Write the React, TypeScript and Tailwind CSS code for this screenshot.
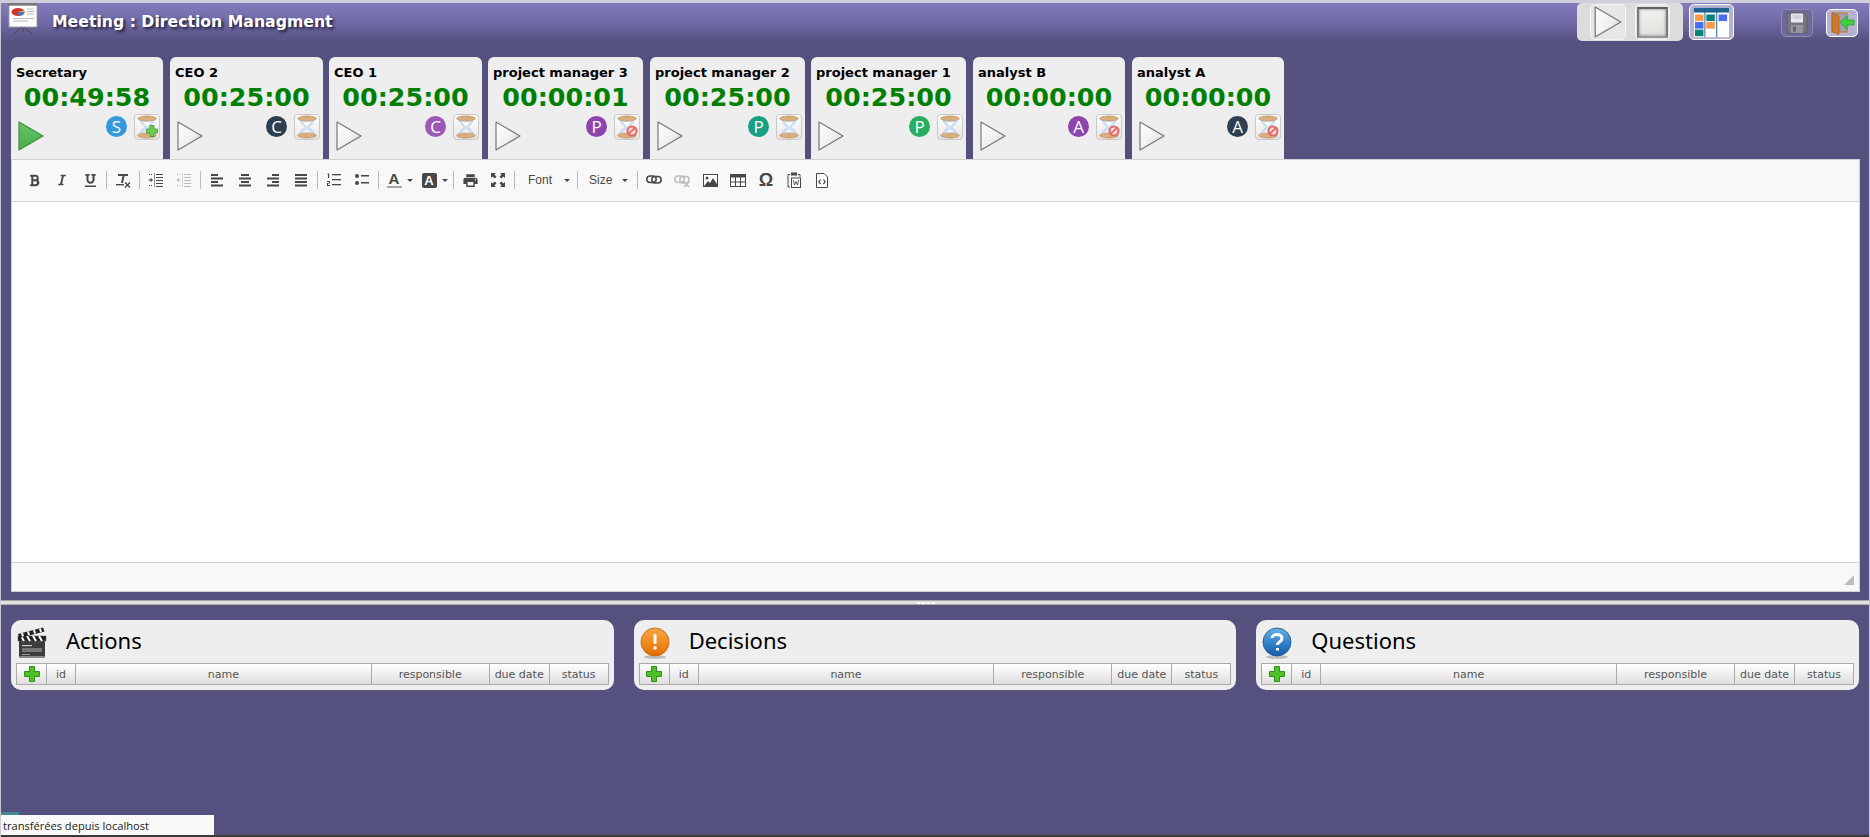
import React from "react";
import { FaBold, FaItalic, FaUnderline } from "react-icons/fa";
import { MdPrint } from "react-icons/md";

const Play = ({ green = false, w = 26, h = 30 }: { green?: boolean; w?: number; h?: number }) => (
  <svg width={w} height={h} viewBox="0 0 26 30">
    <defs>
      <linearGradient id="pw" x1="0" y1="0" x2="1" y2="1">
        <stop offset="0" stopColor="#ffffff" />
        <stop offset="0.5" stopColor="#f2f2f2" />
        <stop offset="1" stopColor="#d2d2d2" />
      </linearGradient>
      <linearGradient id="pg" x1="0" y1="0" x2="0" y2="1">
        <stop offset="0" stopColor="#66c566" />
        <stop offset="1" stopColor="#48ad48" />
      </linearGradient>
    </defs>
    <path d="M1 1 L25 15 L1 29 Z" fill={green ? "url(#pg)" : "url(#pw)"} stroke={green ? "#3f8f3f" : "#777777"} strokeWidth="1.2" strokeLinejoin="round" />
  </svg>
);

const Hourglass = ({ badge }: { badge?: "add" | "no" }) => (
  <div className="relative w-[26px] h-[26px] rounded-[4px] border border-[#c8c8c8] bg-[linear-gradient(#ffffff,#e6e6e6)] flex items-center justify-center shrink-0">
    <svg width="24" height="24" viewBox="0 0 22 22">
      <path d="M4.5 3 C4.5 9 9.5 10 9.5 11 C9.5 12 4.5 13 4.5 19 L17.5 19 C17.5 13 12.5 12 12.5 11 C12.5 10 17.5 9 17.5 3 Z" fill="#cfe3f8" stroke="#a9c2de" strokeWidth="0.5" />
      <path d="M7.5 6.5 L14.5 6.5 L11 10.5 Z" fill="#ffffff" />
      <path d="M6.5 18 C8 14.5 10 14 11 13 C12 14 14 14.5 15.5 18 Z" fill="#f3f8fe" />
      <ellipse cx="11" cy="3.2" rx="8.6" ry="2.4" fill="#d9ae7e" stroke="#b58a5c" strokeWidth="0.5" />
      <ellipse cx="11" cy="18.8" rx="8.6" ry="2.4" fill="#d9ae7e" stroke="#b58a5c" strokeWidth="0.5" />
    </svg>
    {badge === "add" && (
      <svg className="absolute right-[1px] bottom-[2px]" width="12" height="12" viewBox="0 0 12 12">
        <path d="M4 .5 H8 V4 H11.5 V8 H8 V11.5 H4 V8 H.5 V4 H4 Z" fill="#6fcf4f" stroke="#3d9a2d" strokeWidth="0.8" />
      </svg>
    )}
    {badge === "no" && (
      <svg className="absolute right-[1px] bottom-[2px]" width="12" height="12" viewBox="0 0 12 12">
        <circle cx="6" cy="6" r="5.6" fill="#e46a6a" />
        <circle cx="6" cy="6" r="3.4" fill="#f6dede" />
        <path d="M3 8.6 L8.8 3" stroke="#e46a6a" strokeWidth="1.8" />
      </svg>
    )}
  </div>
);

type C = { title: string; time: string; w: string; play?: boolean; letter: string; color: string; badge?: "add" | "no" };
const cards: C[] = [
  { title: "Secretary", time: "00:49:58", w: "w-[152px] mr-px", play: true, letter: "S", color: "bg-[#3498db]", badge: "add" },
  { title: "CEO 2", time: "00:25:00", w: "w-[153px]", letter: "C", color: "bg-[#2c3e50]" },
  { title: "CEO 1", time: "00:25:00", w: "w-[153px]", letter: "C", color: "bg-[#9b59b6]" },
  { title: "project manager 3", time: "00:00:01", w: "w-[155px] mr-px", letter: "P", color: "bg-[#8e44ad]", badge: "no" },
  { title: "project manager 2", time: "00:25:00", w: "w-[155px]", letter: "P", color: "bg-[#16a085]" },
  { title: "project manager 1", time: "00:25:00", w: "w-[155px] mr-px", letter: "P", color: "bg-[#27ae60]" },
  { title: "analyst B", time: "00:00:00", w: "w-[152px] mr-px", letter: "A", color: "bg-[#8e44ad]", badge: "no" },
  { title: "analyst A", time: "00:00:00", w: "w-[152px]", letter: "A", color: "bg-[#2c3e50]", badge: "no" },
];

const Card = ({ c }: { c: C }) => (
  <div className={`${c.w} h-[102px] rounded-t-[6px] bg-[#eeeeee] shrink-0 flex flex-col pt-[8px]`}>
    <div className="pl-[5px] h-[16px] leading-[16px] text-[13px] font-bold text-black font-['DejaVu_Sans',sans-serif] whitespace-nowrap">{c.title}</div>
    <div className="h-[30px] mt-[1px] leading-[30px] text-center text-[25.4px] font-bold text-[#008000] font-['DejaVu_Sans',sans-serif]">{c.time}</div>
    <div className="flex justify-between pl-[7px] pr-[3px] mt-[2px]">
      <div className="mt-[7px]"><Play green={c.play} /></div>
      <div className="flex gap-[7px] items-start">
        <div className={`${c.color} mt-[2px] w-[21px] h-[21px] rounded-full text-white flex items-center justify-center text-[17px] leading-none font-['Open_Sans',sans-serif]`}>{c.letter}</div>
        <Hourglass badge={c.badge} />
      </div>
    </div>
  </div>
);

const Ic = ({ children, dim = false }: { children: React.ReactNode; dim?: boolean }) => (
  <svg width="16" height="16" viewBox="0 0 16 16" fill={dim ? "#bdbdbd" : "#474747"}>{children}</svg>
);
const Btn = ({ children }: { children: React.ReactNode }) => (
  <div className="w-[28px] h-[24px] flex items-center justify-center shrink-0 text-[#474747]">{children}</div>
);
const Sep = () => <div className="w-px h-[18px] mx-[2px] bg-[#bcbcbc] shrink-0" />;
const Caret = () => <div className="ml-[5px] w-0 h-0 border-l-[3px] border-r-[3px] border-t-[3px] border-l-transparent border-r-transparent border-t-[#474747]" />;
const Bars = ({ xs }: { xs: [number, number][] }) => (
  <Ic>{xs.map(([x, w], i) => <rect key={i} x={x} y={2 + i * 3.5} width={w} height="2" />)}</Ic>
);
const Indent = ({ dim, out }: { dim?: boolean; out?: boolean }) => (
  <Ic dim={dim}>
    <rect x="8" y="2" width="7" height="1" /><rect x="8" y="5" width="7" height="1" /><rect x="8" y="8" width="7" height="1" /><rect x="8" y="11" width="7" height="1" /><rect x="8" y="14" width="7" height="1" />
    <rect x="6" y="1" width="1" height="14" opacity="0.6" />
    {out ? <path d="M5 8 L2.5 5.8 V7.5 H0.5 V8.5 H2.5 V10.2 Z" transform="translate(5.5 0) scale(-1 1)" /> : <path d="M5 8 L2.5 5.8 V7.5 H0.5 V8.5 H2.5 V10.2 Z" />}
    <rect x="1" y="2" width="1" height="1" /><rect x="3" y="2" width="1" height="1" /><rect x="1" y="13" width="1" height="1" /><rect x="3" y="13" width="1" height="1" />
  </Ic>
);
const Chain = ({ color, cross }: { color: string; cross?: boolean }) => (
  <svg width="16" height="16" viewBox="0 0 16 16" fill="none">
    <rect x="0.8" y="4" width="9.4" height="6.4" rx="3.2" stroke={color} strokeWidth="1.5" />
    <rect x="5.8" y="4.6" width="9.4" height="6.4" rx="3.2" stroke={color} strokeWidth="1.5" />
    {cross && <path d="M10 10 L15 15 M15 10 L10 15" stroke={color} strokeWidth="1.5" />}
  </svg>
);

const Toolbar = () => (
  <div className="h-[42px] bg-[#f8f8f8] border-b border-[#d1d1d1] flex items-center pl-[8px] pb-[1px]">
    <Btn><FaBold size={13} /></Btn>
    <Btn><FaItalic size={12} /></Btn>
    <Btn><FaUnderline size={13} /></Btn>
    <Sep />
    <Btn>
      <Ic>
        <path d="M3 2 H13 V4 H9.5 L8 11 H6 L7.5 4 H3 Z" />
        <rect x="1" y="12" width="8" height="1.4" />
        <path d="M10 10.5 L15 15.5 M15 10.5 L10 15.5" stroke="#474747" strokeWidth="1.4" fill="none" />
      </Ic>
    </Btn>
    <Sep />
    <Btn><Indent /></Btn>
    <Btn><Indent dim out /></Btn>
    <Sep />
    <Btn><Bars xs={[[2, 7], [2, 12], [2, 7], [2, 12]]} /></Btn>
    <Btn><Bars xs={[[4, 8], [2, 12], [4, 8], [2, 12]]} /></Btn>
    <Btn><Bars xs={[[7, 7], [2, 12], [7, 7], [2, 12]]} /></Btn>
    <Btn><Bars xs={[[2, 12], [2, 12], [2, 12], [2, 12]]} /></Btn>
    <Sep />
    <Btn>
      <Ic>
        <rect x="6" y="2" width="9" height="1.3" /><rect x="6" y="7" width="9" height="1.3" /><rect x="6" y="12" width="9" height="1.3" />
        <path d="M2 1.5 H3.2 V6 H2 V2.6 H1 Z" />
        <path d="M1 9 H4 V11.6 H2 V13 H4.2 V14 H1 V11 H3 V10 H1 Z" />
      </Ic>
    </Btn>
    <Btn>
      <Ic>
        <circle cx="3" cy="4" r="2" /><circle cx="3" cy="11" r="2" />
        <rect x="7" y="3" width="8" height="1.5" /><rect x="7" y="10" width="8" height="1.5" />
      </Ic>
    </Btn>
    <Sep />
    <div className="w-[37px] h-[24px] flex items-center justify-center shrink-0">
      <span className="relative h-[16px] w-[15px] text-center text-[15px] leading-[14px] font-bold text-[#474747] font-['Liberation_Sans',sans-serif] border-b-2 border-[#a8a8a8]">A</span>
      <Caret />
    </div>
    <div className="w-[33px] h-[24px] flex items-center justify-center shrink-0">
      <span className="h-[15px] w-[15px] rounded-[2px] bg-[#474747] text-center text-[13px] leading-[15px] font-bold text-white font-['Liberation_Sans',sans-serif]">A</span>
      <Caret />
    </div>
    <Sep />
    <Btn><MdPrint size={17} /></Btn>
    <Btn>
      <Ic>
        <path d="M1 1 H6 L4.4 2.6 L6.5 4.7 L4.7 6.5 L2.6 4.4 L1 6 Z" />
        <path d="M15 1 V6 L13.4 4.4 L11.3 6.5 L9.5 4.7 L11.6 2.6 L10 1 Z" />
        <path d="M1 15 V10 L2.6 11.6 L4.7 9.5 L6.5 11.3 L4.4 13.4 L6 15 Z" />
        <path d="M15 15 H10 L11.6 13.4 L9.5 11.3 L11.3 9.5 L13.4 11.6 L15 10 Z" />
      </Ic>
    </Btn>
    <Sep />
    <div className="w-[58px] h-[24px] flex items-center pl-[11px] text-[12px] text-[#484848] font-['Liberation_Sans',sans-serif] shrink-0">
      Font<span className="ml-[7px]"><Caret /></span>
    </div>
    <Sep />
    <div className="w-[55px] h-[24px] flex items-center pl-[9px] text-[12px] text-[#484848] font-['Liberation_Sans',sans-serif] shrink-0">
      Size<span className="ml-[5px]"><Caret /></span>
    </div>
    <Sep />
    <Btn><Chain color="#474747" /></Btn>
    <Btn><Chain color="#bdbdbd" cross /></Btn>
    <Btn>
      <svg width="15" height="13" viewBox="0 0 15 13">
        <rect x="0.5" y="0.5" width="14" height="12" fill="#fff" stroke="#474747" />
        <circle cx="4" cy="4" r="1.5" fill="#474747" />
        <path d="M1 12 L5 7 L7 9 L10 4 L14 10 V12 Z" fill="#474747" />
      </svg>
    </Btn>
    <Btn>
      <svg width="16" height="13" viewBox="0 0 16 13">
        <rect x="0.5" y="0.5" width="15" height="12" fill="#fff" stroke="#474747" />
        <rect x="0.5" y="0.5" width="15" height="3" fill="#474747" />
        <path d="M5.5 3 V12.5 M10.5 3 V12.5 M0.5 8 H15.5" stroke="#474747" fill="none" />
      </svg>
    </Btn>
    <Btn><span className="text-[18px] leading-none font-bold text-[#474747] font-['Liberation_Sans',sans-serif]">Ω</span></Btn>
    <Btn>
      <svg width="14" height="16" viewBox="0 0 14 16">
        <path d="M3 2.5 H1 V15 H3" fill="none" stroke="#474747" />
        <path d="M11 2.5 H13 V5" fill="none" stroke="#474747" />
        <rect x="4" y="0.5" width="6" height="3" fill="#474747" />
        <rect x="4.5" y="6" width="9" height="9.5" fill="#fff" stroke="#474747" />
        <path d="M6.3 8 L7.5 13 L9 9.5 L10.5 13 L11.7 8" fill="none" stroke="#474747" strokeWidth="0.9" />
      </svg>
    </Btn>
    <Btn>
      <svg width="12" height="15" viewBox="0 0 12 15">
        <path d="M.5 .5 H8 L11.5 4 V14.5 H.5 Z" fill="#fff" stroke="#474747" />
        <path d="M4.6 6.5 L2.8 8.8 L4.6 11 M7.4 6.5 L9.2 8.8 L7.4 11" fill="none" stroke="#474747" strokeWidth="1.2" />
      </svg>
    </Btn>
  </div>
);

const Plus = () => (
  <svg width="16" height="16" viewBox="0 0 16 16">
    <path d="M5.5 .5 H10.5 V5.5 H15.5 V10.5 H10.5 V15.5 H5.5 V10.5 H.5 V5.5 H5.5 Z" fill="#4fc026" stroke="#2f8f18" />
  </svg>
);

const Clapper = () => (
  <svg width="30" height="32" viewBox="0 0 30 32">
    <rect x="2" y="14" width="26" height="17" fill="#3c3c3c" />
    <rect x="2" y="29" width="26" height="2" fill="#8a8a8a" />
    <rect x="1" y="9" width="28" height="5" fill="#222" stroke="#555" strokeWidth="0.5" />
    <path d="M4 9 L7 14 M10 9 L13 14 M16 9 L19 14 M22 9 L25 14" stroke="#fff" strokeWidth="2" />
    <path d="M1 7 L26 0.5 L27.5 4.5 L2.5 11 Z" fill="#222" />
    <path d="M5 6 L6 9.5 M11 4.5 L12 8 M17 3 L18 6.5 M23 1.5 L24 5" stroke="#fff" strokeWidth="2" />
    <rect x="5" y="18" width="10" height="1.2" fill="#ccc" />
    <rect x="5" y="21" width="20" height="4" fill="#777" />
    <rect x="5" y="27" width="8" height="1" fill="#999" />
  </svg>
);
const Ball = ({ kind }: { kind: "o" | "b" }) => (
  <svg width="30" height="32" viewBox="0 0 30 32">
    <defs>
      <linearGradient id="bo" x1="0" y1="0" x2="0" y2="1"><stop offset="0" stopColor="#f5a54a" /><stop offset="0.55" stopColor="#f08a1d" /><stop offset="1" stopColor="#e06a05" /></linearGradient>
      <linearGradient id="bb" x1="0" y1="0" x2="0" y2="1"><stop offset="0" stopColor="#6cb2e4" /><stop offset="0.55" stopColor="#2f80c8" /><stop offset="1" stopColor="#175ba8" /></linearGradient>
    </defs>
    <ellipse cx="15" cy="30" rx="11" ry="1.8" fill="#bbbbbb" />
    <circle cx="15" cy="15" r="14" fill={kind === "o" ? "url(#bo)" : "url(#bb)"} stroke={kind === "o" ? "#c85f08" : "#16518f"} strokeWidth="0.8" />
    {kind === "o" ? (
      <g fill="#fff"><rect x="13.5" y="7" width="3" height="10" rx="1" /><circle cx="15" cy="21" r="1.8" /></g>
    ) : (
      <path d="M10 11 C10 6.5 20 6 20 11.5 C20 15 15.5 14.5 15.5 18 M15.5 21 V23.5" fill="none" stroke="#fff" strokeWidth="3" />
    )}
  </svg>
);

const Panel = ({ title, icon }: { title: string; icon: React.ReactNode }) => (
  <div className="h-[70px] rounded-[10px] bg-[#eeeeee] px-[5px] flex flex-col">
    <div className="h-[43px] flex items-center pt-[1px]">
      <div className="w-[30px] ml-[1px] shrink-0 mt-[1px]">{icon}</div>
      <div className="ml-[19px] text-[22px] leading-none text-black font-['Noto_Sans',sans-serif] mb-[5px]">{title}</div>
    </div>
    <div className="h-[22px] flex border border-[#aaaaaa] bg-[linear-gradient(#ffffff,#dedede)] text-[11px] text-[#555555] font-['DejaVu_Sans',sans-serif]">
      <div className="w-[30px] flex items-center justify-center border-r border-[#aaaaaa] shrink-0"><Plus /></div>
      <div className="w-[29px] flex items-center justify-center border-r border-[#aaaaaa] shrink-0 pt-[2px]">id</div>
      <div className="flex-1 flex items-center justify-center border-r border-[#aaaaaa] pt-[2px]">name</div>
      <div className="w-[118px] flex items-center justify-center border-r border-[#aaaaaa] shrink-0 pt-[2px]">responsible</div>
      <div className="w-[60px] flex items-center justify-center border-r border-[#aaaaaa] shrink-0 whitespace-nowrap pt-[2px]">due date</div>
      <div className="w-[58px] flex items-center justify-center shrink-0 pt-[2px]">status</div>
    </div>
  </div>
);

export default function App() {
  return (
    <div className="relative h-[837px] overflow-hidden bg-[#55517f] border-x border-[#c9c9d6]">
      {/* header */}
      <div className="h-[41px] border-t-[3px] border-[#cfcfdc] bg-[linear-gradient(#827cbc_0%,#6f6aa6_50%,#55517f_100%)] flex items-start pr-[11px]">
        <div className="ml-[7px] shrink-0">
          <svg width="30" height="31" viewBox="0 0 30 31">
            <path d="M15 23 L6 31 M15 23 L24 31 M15 22 V29" stroke="#444" strokeWidth="1" />
            <rect x="1" y="2" width="28" height="22" fill="#fbfbfb" stroke="#999" strokeWidth="0.8" />
            <rect x="0" y="0" width="30" height="2.5" fill="#777" />
            <ellipse cx="10" cy="9" rx="6.5" ry="4" fill="#d5342c" />
            <path d="M10 9 L16.5 9 A6.5 4 0 0 1 11 13 Z" fill="#3f7fc4" />
            <path d="M10 9 L16 7.5 A6.5 4 0 0 1 16.5 9 Z" fill="#e8c53a" />
            <path d="M19 6 H26 M19 8.5 H26 M19 11 H26 M5 15.5 H26 M5 18 H20" stroke="#bbb" strokeWidth="1" />
          </svg>
        </div>
        <div className="ml-[14px] mt-[9px] text-[15.7px] leading-[20px] font-bold text-white font-['DejaVu_Sans',sans-serif] [text-shadow:2px_2px_3px_#1f1d3a] whitespace-nowrap">
          Meeting : Direction Managment
        </div>
        <div className="ml-auto flex items-start">
          <div className="h-[38px] rounded-[5px] bg-[#dcdcdc] px-[13px] flex items-center gap-[9px]">
            <div className="w-[36px] h-[36px] rounded-[5px] border border-[#f4f4f4] bg-[#e6e6e6] flex items-center justify-center">
              <Play w={28} h={32} />
            </div>
            <div className="w-[35px] h-[36px] rounded-[5px] border border-[#f4f4f4] bg-[#e6e6e6] flex items-center justify-center">
              <div className="w-[31px] h-[31px] border-[2px] border-t-[#5f5f5f] border-l-[#7a7a7a] border-r-[#7a7a7a] border-b-[#9a9a9a] bg-[linear-gradient(165deg,#f2f2f0_0%,#e9e9e6_50%,#dcdcd8_100%)] shadow-[inset_0_0_3px_#777]" />
            </div>
          </div>
          <div className="ml-[6px] mt-[1px] w-[45px] h-[36px] rounded-[5px] border border-white bg-[#b5b3cf] p-[4px] flex items-center justify-center">
            <svg width="37" height="31" viewBox="0 0 37 31">
              <rect width="37" height="31" fill="#fff" />
              <rect width="37" height="5" fill="#1f6390" />
              <path d="M11.5 0 V31 M24 0 V31" stroke="#1f6390" strokeWidth="1" />
              <rect x="1" y="7" width="9" height="7" fill="#fb9a4b" />
              <rect x="1" y="15" width="9" height="7" fill="#4a6df0" />
              <rect x="1" y="23" width="9" height="7" fill="#0b8177" />
              <rect x="13" y="7" width="9" height="7" fill="#0b8177" />
              <rect x="13" y="15" width="9" height="7" fill="#fb9a4b" />
              <rect x="26" y="7" width="9" height="7" fill="#4a6df0" />
            </svg>
          </div>
          <div className="ml-[47px] mt-[6px] w-[32px] h-[28px] rounded-[5px] border border-[#8f8db0] bg-[#6e6a98] flex items-center justify-center">
            <svg width="22" height="22" viewBox="0 0 22 22">
              <path d="M1 1 H18 L21 4 V21 H1 Z" fill="#77757f" stroke="#55535c" strokeWidth="0.6" />
              <rect x="5" y="1.5" width="12" height="9" fill="#e9e9f0" />
              <path d="M6.5 4 H15.5 M6.5 6 H15.5" stroke="#a9a9b5" strokeWidth="0.8" />
              <rect x="5" y="13" width="12" height="8" fill="#98969f" />
              <rect x="7" y="14.5" width="3" height="5" fill="#66646d" />
            </svg>
          </div>
          <div className="ml-[13px] mt-[6px] w-[32px] h-[28px] rounded-[5px] border border-white bg-[#b5b3cf] flex items-center justify-center">
            <svg width="26" height="24" viewBox="0 0 26 24">
              <rect x="3" y="2" width="15" height="19" fill="#a0a0a8" stroke="#c8742a" strokeWidth="1" />
              <path d="M3 1.5 L10 5 V23.5 L3 20.5 Z" fill="#cf7a2c" stroke="#8f4d14" strokeWidth="0.5" />
              <path d="M25 9 H18 V5 L11 11.5 L18 18 V14 H25 Z" fill="#3fcf3f" stroke="#1f9a2a" strokeWidth="0.7" />
            </svg>
          </div>
        </div>
      </div>

      {/* timers */}
      <div className="mt-[16px] pl-[10px] flex gap-[6px]">
        {cards.map((c, i) => <Card key={i} c={c} />)}
      </div>

      {/* editor */}
      <div className="ml-[10px] mr-[9px] h-[433px] border border-[#d1d1d1] bg-white flex flex-col">
        <Toolbar />
        <div className="flex-1 bg-white" />
        <div className="h-[29px] bg-[#f8f8f8] border-t border-[#d1d1d1] flex justify-end items-end pr-[5px] pb-[6px]">
          <svg width="10" height="10" viewBox="0 0 10 10"><path d="M10 0 V10 H0 Z" fill="#bdbdbd" /></svg>
        </div>
      </div>

      {/* splitter */}
      <div className="mt-[8px] h-[5px] bg-[linear-gradient(#8f8f8f,#f0f0f0_40%,#dcdcdc_70%,#9a9a9a)] flex items-center justify-center gap-[2px] pr-[18px]">
        <div className="w-[3px] h-[2px] bg-white" /><div className="w-[3px] h-[2px] bg-white" /><div className="w-[3px] h-[2px] bg-white" /><div className="w-[3px] h-[2px] bg-white" />
      </div>

      {/* panels */}
      <div className="mt-[15px] px-[10px] grid grid-cols-3 gap-[20px]">
        <Panel title="Actions" icon={<Clapper />} />
        <Panel title="Decisions" icon={<Ball kind="o" />} />
        <Panel title="Questions" icon={<Ball kind="b" />} />
      </div>

      {/* status overlay */}
      <div className="absolute left-[-1px] bottom-[22px] w-[19px] h-[3px] bg-[#3f8a8c]" />
      <div className="absolute left-[-1px] bottom-[2px] w-[214px] h-[20px] bg-[#f9f9f9] pl-[3px] pt-px text-[11.1px] leading-[20px] text-[#222222] font-['Open_Sans',sans-serif] whitespace-nowrap">
        transférées depuis localhost
      </div>
      <div className="absolute left-[-1px] right-[-1px] bottom-0 h-[2px] bg-[#3a3a3a]" />
    </div>
  );
}
